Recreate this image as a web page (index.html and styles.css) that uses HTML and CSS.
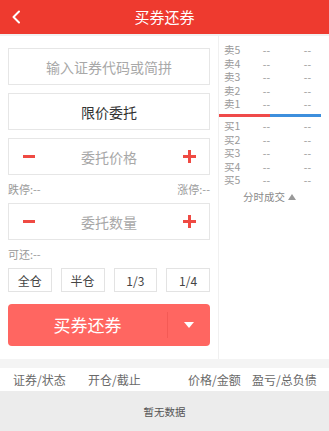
FILE: index.html
```html
<!DOCTYPE html>
<html lang="zh">
<head>
<meta charset="utf-8">
<link rel="stylesheet" href="styles.css">
</head>
<body>
<header class="topbar">
  <span class="back">
    <svg width="10" height="14" viewBox="0 0 10 14"><path d="M8 1.5 L2.5 7 L8 12.5" fill="none" stroke="#fff" stroke-width="2" stroke-linecap="round" stroke-linejoin="round"/></svg>
  </span>
  <h1 class="title">买券还券</h1>
</header>
<div class="strip"></div>
<main class="main">
  <section class="left">
    <div class="box box-input">输入证券代码或简拼</div>
    <div class="box box-type">限价委托</div>
    <div class="box box-step">
      <span class="minus"></span>
      <span class="ph">委托价格</span>
      <span class="plus"></span>
    </div>
    <div class="limits"><span>跌停:--</span><span>涨停:--</span></div>
    <div class="box box-step">
      <span class="minus"></span>
      <span class="ph">委托数量</span>
      <span class="plus"></span>
    </div>
    <div class="limits"><span>可还:--</span></div>
    <div class="ratios">
      <span class="ratio">全仓</span>
      <span class="ratio">半仓</span>
      <span class="ratio">1/3</span>
      <span class="ratio">1/4</span>
    </div>
    <div class="submit">
      <span class="submit-text">买券还券</span>
      <span class="submit-drop"><span class="tri"></span></span>
    </div>
  </section>
  <section class="right">
    <div class="quote">
      <span>卖5</span><span>--</span><span>--</span>
      <span>卖4</span><span>--</span><span>--</span>
      <span>卖3</span><span>--</span><span>--</span>
      <span>卖2</span><span>--</span><span>--</span>
      <span>卖1</span><span>--</span><span>--</span>
    </div>
    <div class="bar"><span class="bar-red"></span><span class="bar-blue"></span></div>
    <div class="quote">
      <span>买1</span><span>--</span><span>--</span>
      <span>买2</span><span>--</span><span>--</span>
      <span>买3</span><span>--</span><span>--</span>
      <span>买4</span><span>--</span><span>--</span>
      <span>买5</span><span>--</span><span>--</span>
    </div>
    <div class="ticks">分时成交 <span class="up"></span></div>
  </section>
</main>
<div class="gap"></div>
<div class="thead">
  <span class="c1">证券/状态</span>
  <span class="c2">开仓/截止</span>
  <span class="c3">价格/金额</span>
  <span class="c4">盈亏/总负债</span>
</div>
<div class="empty">暂无数据</div>
</body>
</html>
```

FILE: styles.css
```css
* { box-sizing: border-box; margin: 0; padding: 0; }
html, body { background: #fff; }
body {
  width: 329px;
  height: 431px;
  overflow: hidden;
  font-family: "Noto Sans CJK SC", "Noto Sans", sans-serif;
  color: #333;
}
.topbar {
  height: 34px;
  background: #ee3a2f;
  display: flex;
  align-items: center;
  justify-content: center;
  position: relative;
}
.back {
  position: absolute;
  left: 11px;
  top: 10px;
  display: flex;
}
.title {
  font-size: 15px;
  font-weight: normal;
  color: #fff;
  line-height: 34px;
}
.strip { height: 2px; background: #f1f1f1; }
.main { display: flex; }
.left {
  width: 219px;
  padding: 12px 8px 13px 8px;
  border-right: 1px solid #f0f0f0;
}
.box {
  height: 37px;
  border: 1px solid #e6e6e6;
  display: flex;
  align-items: center;
  justify-content: center;
  font-size: 14px;
  margin-bottom: 8px;
}
.box-input { color: #a8a8a8; }
.box-type { color: #333; }
.box-step { justify-content: space-between; padding: 0 13px 0 14px; margin-bottom: 0; }
.box-step .ph { color: #a8a8a8; }
.minus { width: 12px; height: 3px; background: #ef4a43; }
.plus { width: 13px; height: 13px; position: relative; }
.plus::before, .plus::after { content: ""; position: absolute; background: #ef4a43; }
.plus::before { left: 0; top: 5px; width: 13px; height: 3px; }
.plus::after { left: 5px; top: 0; width: 3px; height: 13px; }
.limits {
  height: 28px;
  display: flex;
  justify-content: space-between;
  align-items: center;
  font-size: 11px;
  color: #999;
}
.ratios { display: flex; gap: 9px; height: 24px; }
.ratio {
  flex: 1;
  border: 1px solid #e3e3e3;
  display: flex;
  align-items: center;
  justify-content: center;
  font-size: 12px;
  color: #444;
}
.submit {
  margin-top: 12px;
  height: 42px;
  background: #ff6661;
  border-radius: 4px;
  display: flex;
  align-items: center;
}
.submit-text {
  width: 160px;
  text-align: center;
  color: #fff;
  font-size: 17px;
  border-right: 1px solid #f45a55;
  line-height: 26px;
}
.submit-drop { flex: 1; display: flex; justify-content: center; align-items: center; }
.tri {
  width: 0; height: 0;
  border-left: 5px solid transparent;
  border-right: 5px solid transparent;
  border-top: 6px solid #fff;
}
.right { flex: 1; padding-top: 7px; }
.quote {
  display: grid;
  grid-template-columns: 22px 41px 41px;
  padding-left: 5px;
  font-size: 10.5px;
  line-height: 13.6px;
  color: #9a9a9a;
}
.quote span:nth-child(3n+2), .quote span:nth-child(3n) { text-align: center; }
.bar { display: flex; height: 3px; width: 102px; margin: 3px 0 2px 0; }
.bar-red { width: 51px; background: #ef4a4a; }
.bar-blue { flex: 1; background: #3d8fdd; }
.ticks {
  font-size: 10.5px;
  color: #8a8a8a;
  line-height: 20px;
  padding-left: 24px;
  display: flex;
  align-items: center;
  gap: 3px;
}
.up {
  width: 0; height: 0;
  border-left: 4.5px solid transparent;
  border-right: 4.5px solid transparent;
  border-bottom: 6px solid #999;
}
.gap { height: 9px; background: #f4f4f4; }
.thead {
  height: 23px;
  display: flex;
  align-items: center;
  font-size: 12px;
  color: #6a6a6a;
  background: #fff;
  padding-left: 13px;
}
.c1 { width: 75px; }
.c2 { width: 100px; }
.c3 { width: 64px; }
.empty {
  height: 40px;
  background: #ececec;
  display: flex;
  align-items: center;
  justify-content: center;
  font-size: 10.5px;
  color: #555;
}
```
